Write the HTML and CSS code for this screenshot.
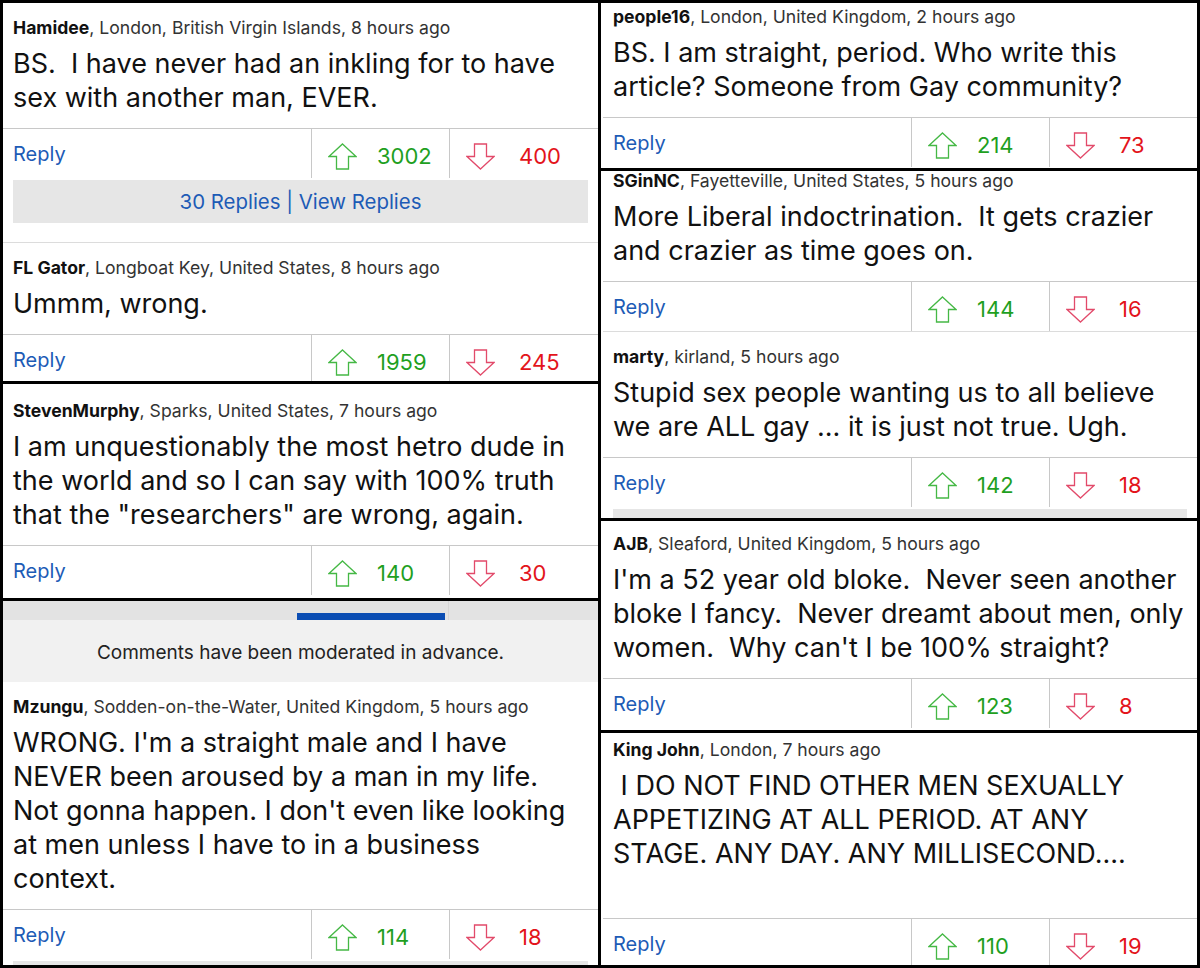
FILE: index.html
```html
<!DOCTYPE html>
<html lang="en">
	<head>
		<meta charset="utf-8">
		<title>Comments</title>
		<link rel="stylesheet" href="styles.css">
	</head>
	<body>
		<div class="collage">
			<!-- left column -->
			<div class="col">
				<div class="shot shot-a">
					<div class="feed">
						<div class="comment">
							<div class="meta"><b>Hamidee</b>, London, British Virgin Islands, 8 hours ago</div>
							<div class="text">BS.&nbsp; I have never had an inkling for to have<br>sex with another man, EVER.</div>
							<div class="actions">
								<div class="reply">Reply</div>
								<div class="vote up"><svg viewBox="0 0 29 27"><path d="M14.5 1 L28 13.5 L20.5 13.5 L20.5 26 L8.5 26 L8.5 13.5 L1 13.5 Z"/></svg><span>3002</span></div>
								<div class="vote down"><svg viewBox="0 0 29 27"><path d="M14.5 26 L28 13.5 L20.5 13.5 L20.5 1 L8.5 1 L8.5 13.5 L1 13.5 Z"/></svg><span>400</span></div>
							</div>
							<div class="replies">30 Replies | View Replies</div>
						</div>
						<div class="comment">
							<div class="meta"><b>FL Gator</b>, Longboat Key, United States, 8 hours ago</div>
							<div class="text">Ummm, wrong.</div>
							<div class="actions">
								<div class="reply">Reply</div>
								<div class="vote up"><svg viewBox="0 0 29 27"><path d="M14.5 1 L28 13.5 L20.5 13.5 L20.5 26 L8.5 26 L8.5 13.5 L1 13.5 Z"/></svg><span>1959</span></div>
								<div class="vote down"><svg viewBox="0 0 29 27"><path d="M14.5 26 L28 13.5 L20.5 13.5 L20.5 1 L8.5 1 L8.5 13.5 L1 13.5 Z"/></svg><span>245</span></div>
							</div>
						</div>
					</div>
				</div>

				<div class="shot shot-b">
					<div class="feed">
						<div class="comment">
							<div class="meta"><b>StevenMurphy</b>, Sparks, United States, 7 hours ago</div>
							<div class="text">I am unquestionably the most hetro dude in<br>the world and so I can say with 100% truth<br>that the "researchers" are wrong, again.</div>
							<div class="actions">
								<div class="reply">Reply</div>
								<div class="vote up"><svg viewBox="0 0 29 27"><path d="M14.5 1 L28 13.5 L20.5 13.5 L20.5 26 L8.5 26 L8.5 13.5 L1 13.5 Z"/></svg><span>140</span></div>
								<div class="vote down"><svg viewBox="0 0 29 27"><path d="M14.5 26 L28 13.5 L20.5 13.5 L20.5 1 L8.5 1 L8.5 13.5 L1 13.5 Z"/></svg><span>30</span></div>
							</div>
						</div>
					</div>
				</div>

				<div class="shot shot-c">
					<div class="feed">
						<div class="tabs"><div class="tab-active"></div><div class="tab-edge"></div></div>
						<div class="notice">Comments have been moderated in advance.</div>
						<div class="comment">
							<div class="meta"><b>Mzungu</b>, Sodden-on-the-Water, United Kingdom, 5 hours ago</div>
							<div class="text">WRONG. I'm a straight male and I have<br>NEVER been aroused by a man in my life.<br>Not gonna happen. I don't even like looking<br>at men unless I have to in a business<br>context.</div>
							<div class="actions">
								<div class="reply">Reply</div>
								<div class="vote up"><svg viewBox="0 0 29 27"><path d="M14.5 1 L28 13.5 L20.5 13.5 L20.5 26 L8.5 26 L8.5 13.5 L1 13.5 Z"/></svg><span>114</span></div>
								<div class="vote down"><svg viewBox="0 0 29 27"><path d="M14.5 26 L28 13.5 L20.5 13.5 L20.5 1 L8.5 1 L8.5 13.5 L1 13.5 Z"/></svg><span>18</span></div>
							</div>
							<div class="replies"></div>
						</div>
					</div>
				</div>
			</div>

			<!-- right column -->
			<div class="col col-right">
				<div class="shot shot-d">
					<div class="feed">
						<div class="comment">
							<div class="meta"><b>people16</b>, London, United Kingdom, 2 hours ago</div>
							<div class="text">BS. I am straight, period. Who write this<br>article? Someone from Gay community?</div>
							<div class="actions">
								<div class="reply">Reply</div>
								<div class="vote up"><svg viewBox="0 0 29 27"><path d="M14.5 1 L28 13.5 L20.5 13.5 L20.5 26 L8.5 26 L8.5 13.5 L1 13.5 Z"/></svg><span>214</span></div>
								<div class="vote down"><svg viewBox="0 0 29 27"><path d="M14.5 26 L28 13.5 L20.5 13.5 L20.5 1 L8.5 1 L8.5 13.5 L1 13.5 Z"/></svg><span>73</span></div>
							</div>
						</div>
					</div>
				</div>

				<div class="shot shot-e">
					<div class="feed">
						<div class="comment">
							<div class="meta"><b>SGinNC</b>, Fayetteville, United States, 5 hours ago</div>
							<div class="text">More Liberal indoctrination.&nbsp; It gets crazier<br>and crazier as time goes on.</div>
							<div class="actions">
								<div class="reply">Reply</div>
								<div class="vote up"><svg viewBox="0 0 29 27"><path d="M14.5 1 L28 13.5 L20.5 13.5 L20.5 26 L8.5 26 L8.5 13.5 L1 13.5 Z"/></svg><span>144</span></div>
								<div class="vote down"><svg viewBox="0 0 29 27"><path d="M14.5 26 L28 13.5 L20.5 13.5 L20.5 1 L8.5 1 L8.5 13.5 L1 13.5 Z"/></svg><span>16</span></div>
							</div>
						</div>
						<div class="comment">
							<div class="meta"><b>marty</b>, kirland, 5 hours ago</div>
							<div class="text">Stupid sex people wanting us to all believe<br>we are ALL gay ... it is just not true. Ugh.</div>
							<div class="actions">
								<div class="reply">Reply</div>
								<div class="vote up"><svg viewBox="0 0 29 27"><path d="M14.5 1 L28 13.5 L20.5 13.5 L20.5 26 L8.5 26 L8.5 13.5 L1 13.5 Z"/></svg><span>142</span></div>
								<div class="vote down"><svg viewBox="0 0 29 27"><path d="M14.5 26 L28 13.5 L20.5 13.5 L20.5 1 L8.5 1 L8.5 13.5 L1 13.5 Z"/></svg><span>18</span></div>
							</div>
							<div class="replies"></div>
						</div>
					</div>
				</div>

				<div class="shot shot-f">
					<div class="feed">
						<div class="comment">
							<div class="meta"><b>AJB</b>, Sleaford, United Kingdom, 5 hours ago</div>
							<div class="text">I'm a 52 year old bloke.&nbsp; Never seen another<br>bloke I fancy.&nbsp; Never dreamt about men, only<br>women.&nbsp; Why can't I be 100% straight?</div>
							<div class="actions">
								<div class="reply">Reply</div>
								<div class="vote up"><svg viewBox="0 0 29 27"><path d="M14.5 1 L28 13.5 L20.5 13.5 L20.5 26 L8.5 26 L8.5 13.5 L1 13.5 Z"/></svg><span>123</span></div>
								<div class="vote down"><svg viewBox="0 0 29 27"><path d="M14.5 26 L28 13.5 L20.5 13.5 L20.5 1 L8.5 1 L8.5 13.5 L1 13.5 Z"/></svg><span>8</span></div>
							</div>
						</div>
					</div>
				</div>

				<div class="shot shot-g">
					<div class="feed">
						<div class="comment">
							<div class="meta"><b>King John</b>, London, 7 hours ago</div>
							<div class="text">&nbsp;I DO NOT FIND OTHER MEN SEXUALLY<br>APPETIZING AT ALL PERIOD. AT ANY<br>STAGE. ANY DAY. ANY MILLISECOND....<br>&nbsp;</div>
							<div class="actions">
								<div class="reply">Reply</div>
								<div class="vote up"><svg viewBox="0 0 29 27"><path d="M14.5 1 L28 13.5 L20.5 13.5 L20.5 26 L8.5 26 L8.5 13.5 L1 13.5 Z"/></svg><span>110</span></div>
								<div class="vote down"><svg viewBox="0 0 29 27"><path d="M14.5 26 L28 13.5 L20.5 13.5 L20.5 1 L8.5 1 L8.5 13.5 L1 13.5 Z"/></svg><span>19</span></div>
							</div>
						</div>
					</div>
				</div>
			</div>
		</div>
	</body>
</html>
```

FILE: styles.css
```css
html,body{margin:0;padding:0;background:#000;}
body{font-family:"Inter","Roboto","Liberation Sans",sans-serif;color:#111;}

.collage{display:grid;grid-template-columns:595px 596px;gap:3px;padding:3px;height:962px;}
.col{display:flex;flex-direction:column;gap:3px;min-height:0;}
.shot{background:#fff;overflow:hidden;}
.col-right .shot{padding-left:2px;}

/* each shot is a crop of a longer page */
.shot-a{height:378px;}
.shot-b{height:214px;}
.shot-b .feed{margin-top:2px;}
.shot-c{height:364px;}
.shot-d{height:165px;}
.shot-d .feed{margin-top:-11px;}
.shot-e{height:347px;}
.shot-e .feed{margin-top:-15px;}
.shot-f{height:209px;}
.shot-f .feed{margin-top:-2px;}
.shot-g{height:232px;}
.shot-g .feed{margin-top:-8px;}

.comment + .comment{border-top:1px solid #dcdcdc;}
.meta{padding:15px 10px 0;font-size:17.6px;line-height:20px;height:20px;color:#333;white-space:nowrap;}
.meta b{color:#111;font-weight:700;}
.text{padding:9px 10px 13px;font-size:27px;line-height:34px;white-space:nowrap;}

.actions{display:flex;height:50px;box-sizing:border-box;border-top:1px solid #c8c8c8;}
.reply{width:298px;padding-left:10px;display:flex;align-items:center;font-size:20px;color:#1d5bb6;}
.vote{display:flex;align-items:center;gap:20px;width:138px;padding:5px 0 0 16px;box-sizing:border-box;border-left:1px solid #c8c8c8;font-size:22px;}
.vote.down{flex:1;gap:24px;}
.vote svg{width:29px;height:27px;fill:none;stroke-width:1.3;}
.up svg{stroke:#45b845;}
.down svg{stroke:#e24a6a;}
.up span{color:#1fa01f;}
.down span{color:#e3141b;}

.replies{margin:2px 10px 19px;height:43px;background:#e6e6e6;display:flex;align-items:center;justify-content:center;font-size:20.4px;color:#1d5bb6;}

.tabs{height:19px;background:#e3e3e3;display:flex;align-items:flex-end;}
.tab-active{margin-left:294px;width:148px;height:7px;background:#0b4db3;}
.tab-edge{margin-left:3px;width:1px;height:19px;background:#d6d6d6;}
.notice{height:62px;background:#f1f1f1;display:flex;align-items:center;justify-content:center;font-size:19px;color:#222;padding-top:2px;box-sizing:border-box;}
```
